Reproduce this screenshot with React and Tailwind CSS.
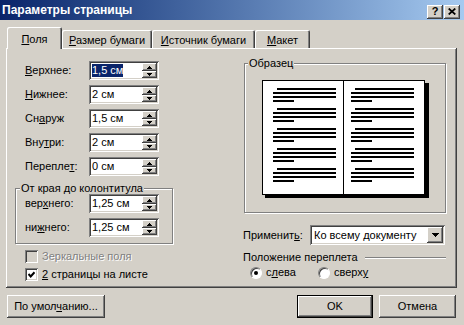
import React from "react";

const raised =
  "bg-[#d4d0c8] shadow-[inset_-1px_-1px_#404040,inset_1px_1px_#ffffff,inset_-2px_-2px_#808080]";
const sunken =
  "shadow-[inset_1px_1px_#808080,inset_-1px_-1px_#ffffff,inset_2px_2px_#404040,inset_-2px_-2px_#d4d0c8]";
const etched = "border border-[#808080] shadow-[1px_1px_0_#ffffff,inset_1px_1px_0_#ffffff]";

function Up() {
  return (
    <svg width="5" height="3" shapeRendering="crispEdges">
      <path d="M2 0h1v1h1v1h1v1H0V2h1V1h1z" fill="#000" />
    </svg>
  );
}

function Down({ big }) {
  if (big) {
    return (
      <svg width="7" height="4" shapeRendering="crispEdges">
        <path d="M0 0h7v1H6v1H5v1H4v1H3V3H2V2H1V1H0z" fill="#000" />
      </svg>
    );
  }
  return (
    <svg width="5" height="3" shapeRendering="crispEdges">
      <path d="M0 0h5v1H4v1H3v1H2V2H1V1H0z" fill="#000" />
    </svg>
  );
}

function Spin({ value, sel }) {
  return (
    <div className={`w-[70px] h-[19px] bg-white flex p-[2px] ${sunken}`}>
      <div className="flex-1 flex items-center pl-[1px]">
        <span className={sel ? "bg-[#0a246a] text-white" : ""}>{value}</span>
      </div>
      <div className="w-[15px] flex flex-col">
        <div className={`h-[8px] flex items-center justify-center ${raised}`}>
          <Up />
        </div>
        <div className={`h-[7px] flex items-center justify-center ${raised}`}>
          <Down />
        </div>
      </div>
    </div>
  );
}

function Row({ label, value, sel }) {
  return (
    <div className="flex items-center h-[19px]">
      <div className="w-[64px]">{label}</div>
      <Spin value={value} sel={sel} />
    </div>
  );
}

function Check({ checked, disabled }) {
  return (
    <div
      className={`w-[13px] h-[13px] flex items-center justify-center ${
        disabled ? "bg-[#d4d0c8]" : "bg-white"
      } ${sunken}`}
    >
      {checked && (
        <svg width="7" height="7">
          <polyline points="0.5,3 2.7,5.5 6.5,1.2" fill="none" stroke="#000" strokeWidth="2" />
        </svg>
      )}
    </div>
  );
}

function Radio({ on }) {
  return (
    <div className="w-[12px] h-[12px] rounded-full bg-white border border-t-[#808080] border-l-[#808080] border-r-white border-b-white shadow-[inset_1px_1px_#404040] flex items-center justify-center">
      {on && <div className="w-[4px] h-[4px] rounded-full bg-black" />}
    </div>
  );
}

function Tab({ sel, w, children }) {
  return (
    <div
      className={`${w} flex justify-center bg-[#d4d0c8] rounded-t-[2px] shadow-[inset_1px_1px_#ffffff,inset_-1px_0_#404040,inset_-2px_0_#808080] ${
        sel ? "h-[22px] mb-[-1px] relative z-10 pt-[6px]" : "h-[18px] pt-[4px]"
      }`}
    >
      {children}
    </div>
  );
}

function Book() {
  const groups = [8, 28, 48, 68, 88];
  const page = (x0, x1) =>
    groups.map((y) => (
      <g key={`${x0}-${y}`}>
        <rect x={x0 + 4} y={y} width={x1 - x0 - 4} height="2" />
        <rect x={x0} y={y + 4} width={x1 - x0} height="2" />
        <rect x={x0} y={y + 8} width={x1 - x0} height="2" />
        <rect x={x0} y={y + 12} width="21" height="2" />
      </g>
    ));
  return (
    <svg width="167" height="118" shapeRendering="crispEdges">
      <rect x="3" y="3" width="164" height="115" fill="#000" />
      <rect x="0.5" y="0.5" width="162" height="114" fill="#fff" stroke="#000" />
      <line x1="81.5" y1="0" x2="81.5" y2="115" stroke="#000" />
      <g fill="#000">
        {page(11, 74)}
        {page(89, 152)}
      </g>
    </svg>
  );
}

export default function App() {
  return (
    <div className="w-[464px] h-[325px] bg-[#d4d0c8] overflow-hidden text-[11px] leading-[13px] text-black font-['Liberation_Sans',Arial,sans-serif] select-none">
      {/* Title bar */}
      <div className="h-[20px] flex items-center bg-linear-to-r from-[#0a246a] to-[#a6caf0] pl-[2px] pr-[4px]">
        <span className="text-white font-bold text-[12px] pt-[1px]">Параметры страницы</span>
        <div className="ml-auto mt-[3px] flex gap-[1px]">
          <div className={`w-[16px] h-[14px] flex items-center justify-center font-bold text-[11px] ${raised}`}>
            ?
          </div>
          <div className={`w-[16px] h-[14px] flex items-center justify-center ${raised}`}>
            <svg width="8" height="7">
              <path d="M0.7 0.5 L7.3 6.5 M7.3 0.5 L0.7 6.5" stroke="#000" strokeWidth="1.7" />
            </svg>
          </div>
        </div>
      </div>

      {/* Tabs */}
      <div className="h-[28px] flex items-end pl-[7px]">
        <Tab sel w="w-[55px]">
          <span>
            <u>П</u>оля
          </span>
        </Tab>
        <Tab w="w-[90px]">
          <span>
            <u>Р</u>азмер бумаги
          </span>
        </Tab>
        <Tab w="w-[103px]">
          <span>
            <u>И</u>сточник бумаги
          </span>
        </Tab>
        <Tab w="w-[55px]">
          <span>
            <u>М</u>акет
          </span>
        </Tab>
      </div>

      {/* Panel */}
      <div className={`ml-[6px] w-[451px] h-[240px] flex ${raised}`}>
        {/* Left column */}
        <div className="w-[237px] pl-[9px] pt-[13px] flex flex-col">
          <div className="pl-[10px] flex flex-col gap-[5px]">
            <Row label={<><u>В</u>ерхнее:</>} value="1,5 см" sel />
            <Row label={<><u>Н</u>ижнее:</>} value="2 см" />
            <Row label={<>Сн<u>а</u>руж</>} value="1,5 см" />
            <Row label={<>Вну<u>т</u>ри:</>} value="2 см" />
            <Row label={<>Перепле<u>т</u>:</>} value="0 см" />
          </div>

          <fieldset className={`mt-[6px] w-[158px] ${etched}`}>
            <legend className="ml-[4px] px-[1px] leading-[12px] bg-[#d4d0c8]">От края до колонтитула</legend>
            <div className="pl-[9px] pb-[6px] flex flex-col gap-[5px]">
              <Row label={<>вер<u>х</u>него:</>} value="1,25 см" />
              <Row label={<>ни<u>ж</u>него:</>} value="1,25 см" />
            </div>
          </fieldset>

          <div className="mt-[6px] pl-[10px] flex flex-col gap-[5px]">
            <div className="h-[13px] flex items-center gap-[4px]">
              <Check disabled />
              <span className="text-[#808080] [text-shadow:1px_1px_#ffffff]">Зеркальные поля</span>
            </div>
            <div className="h-[13px] flex items-center gap-[4px]">
              <Check checked />
              <span>
                <u>2</u> страницы на листе
              </span>
            </div>
          </div>
        </div>

        {/* Right column */}
        <div className="pt-[9px] flex flex-col">
          <fieldset className={`ml-[1px] w-[202px] ${etched}`}>
            <legend className="ml-[3px] px-[1px] leading-[12px] bg-[#d4d0c8]">Образец</legend>
            <div className="ml-[17px] mt-[11px] pb-[14px]">
              <Book />
            </div>
          </fieldset>

          <div className="mt-[12px] h-[20px] flex items-center">
            <div className="w-[67px]">
              Применит<u>ь</u>:
            </div>
            <div className={`w-[135px] h-[20px] bg-white flex p-[2px] ${sunken}`}>
              <div className="flex-1 flex items-center pl-[2px]">Ко всему документу</div>
              <div className={`w-[16px] flex items-center justify-center ${raised}`}>
                <Down big />
              </div>
            </div>
          </div>

          <div className="mt-[6px] w-[203px] h-[13px] flex items-center">
            <span>Положение переплета</span>
            <div className="flex-1 ml-[7px] h-[2px] border-t border-t-[#808080] border-b border-b-white" />
          </div>

          <div className="mt-[2px] pl-[7px] h-[13px] flex items-center">
            <div className="w-[68px] flex items-center gap-[4px]">
              <Radio on />
              <span>
                с<u>л</u>ева
              </span>
            </div>
            <div className="flex items-center gap-[4px]">
              <Radio />
              <span>
                сверх<u>у</u>
              </span>
            </div>
          </div>
        </div>
      </div>

      {/* Buttons */}
      <div className="mt-[7px] flex pl-[7px] pr-[8px]">
        <div className={`w-[98px] h-[23px] flex items-center justify-center ${raised}`}>
          <span>
            По умол<u>ч</u>анию...
          </span>
        </div>
        <div className="ml-auto flex gap-[6px]">
          <div className="w-[76px] h-[23px] flex items-center justify-center bg-[#d4d0c8] shadow-[inset_0_0_0_1px_#000000,inset_-2px_-2px_#404040,inset_2px_2px_#ffffff,inset_-3px_-3px_#808080]">
            OK
          </div>
          <div className={`w-[77px] h-[23px] flex items-center justify-center ${raised}`}>Отмена</div>
        </div>
      </div>
    </div>
  );
}
